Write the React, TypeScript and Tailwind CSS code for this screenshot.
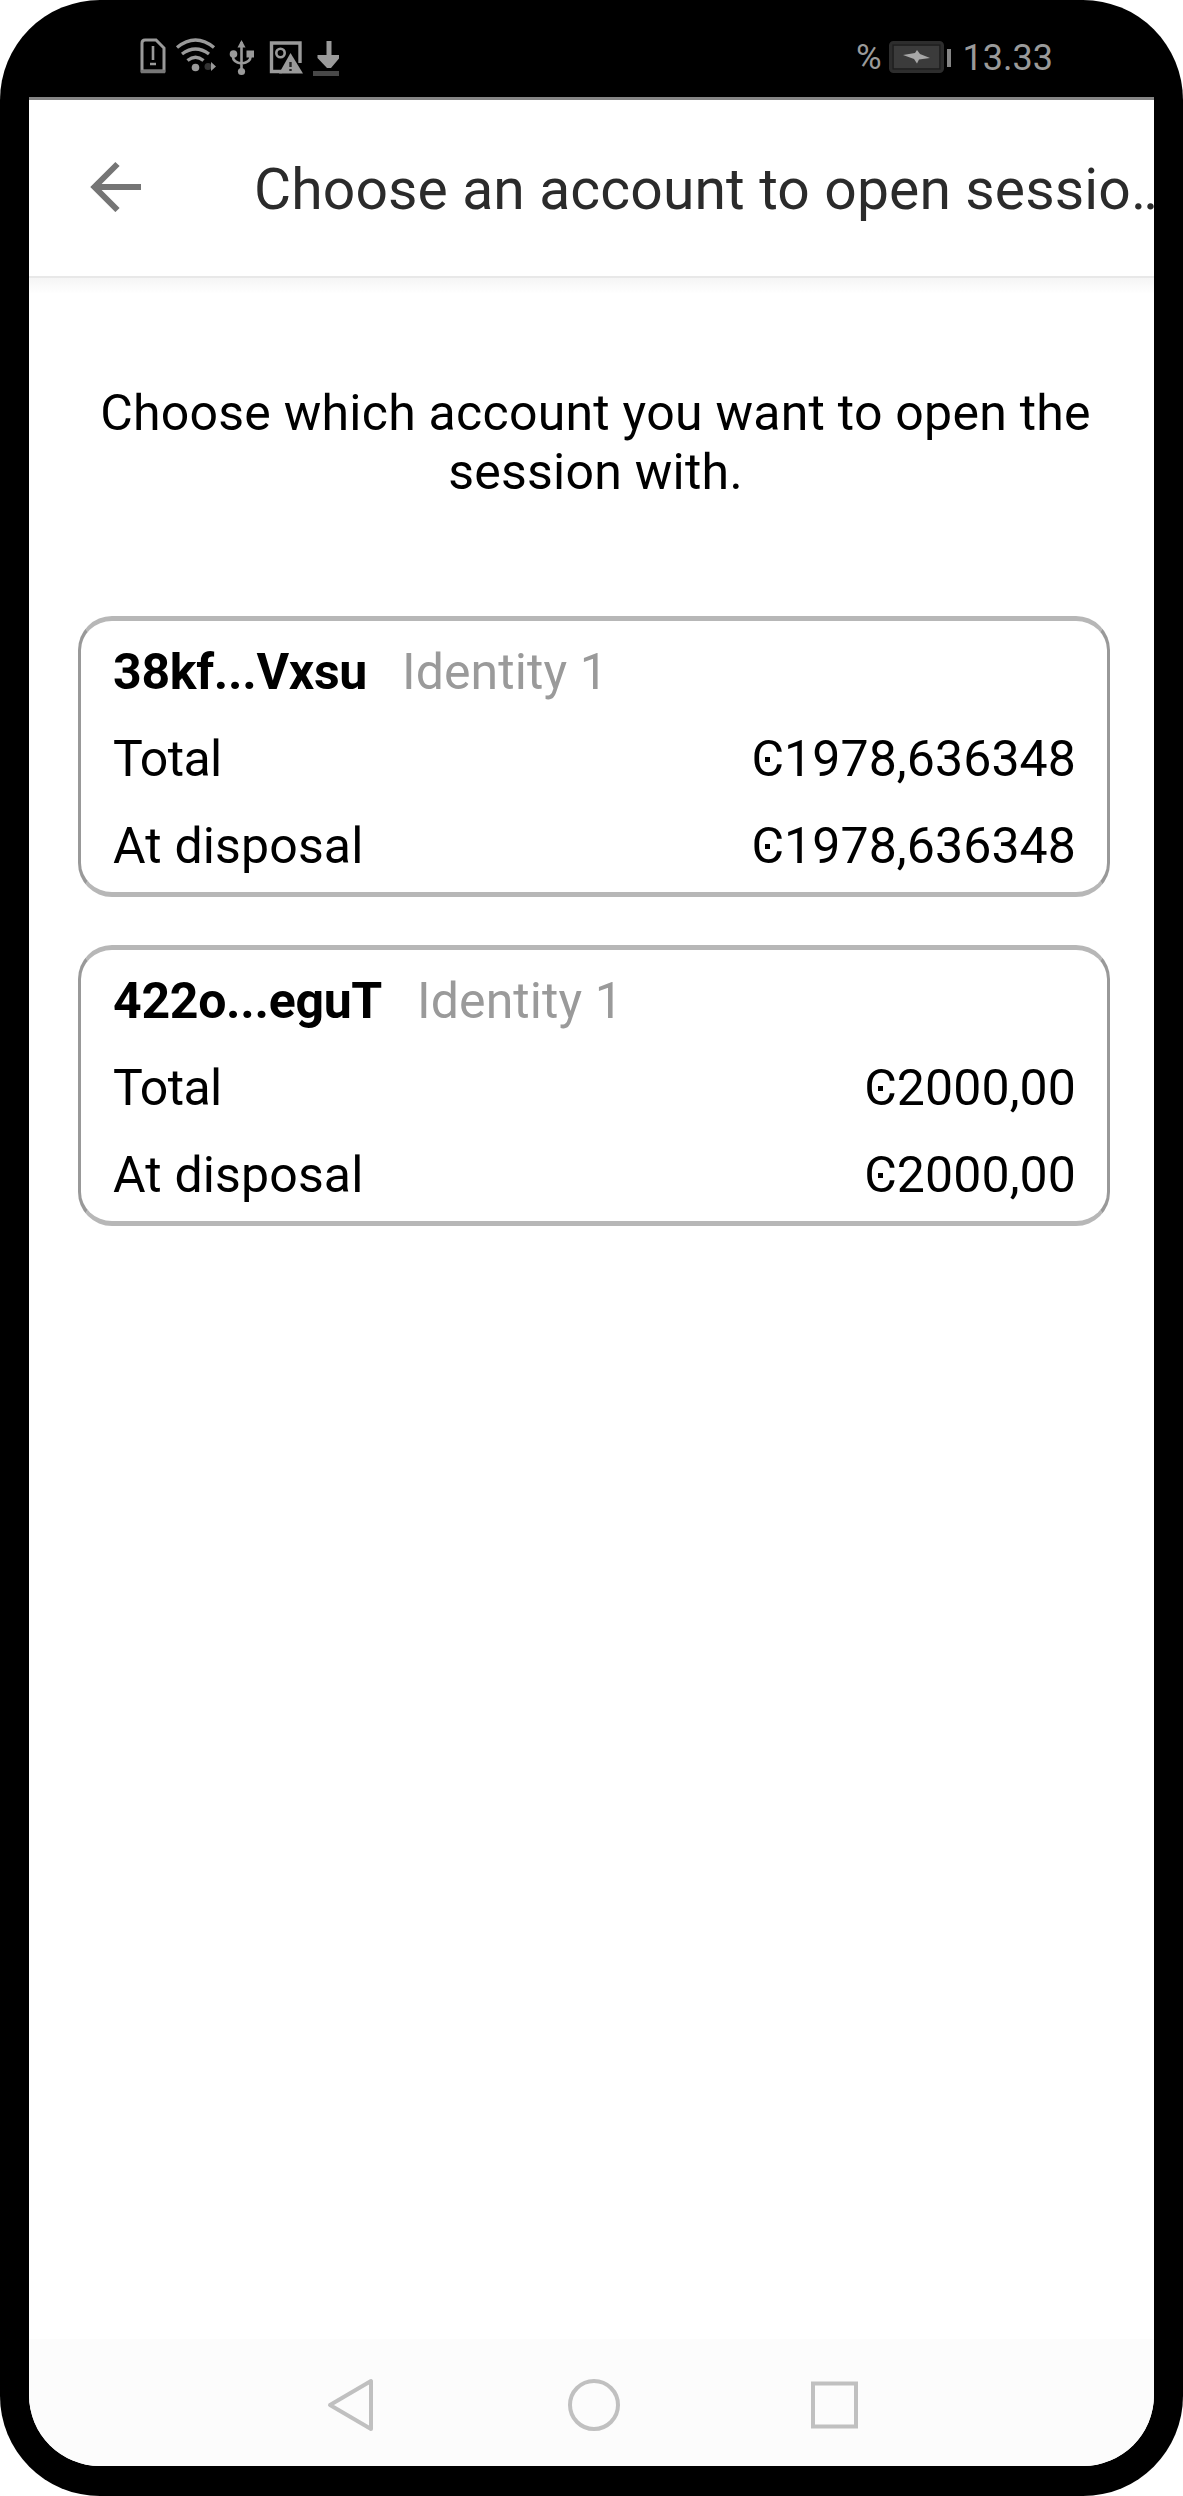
import type { ReactNode } from "react";

type Account = { address: string; identity: string; total: string; disposal: string };

const accounts: Account[] = [
  { address: "38kf...Vxsu", identity: "Identity 1", total: "1978,636348", disposal: "1978,636348" },
  { address: "422o...eguT", identity: "Identity 1", total: "2000,00", disposal: "2000,00" },
];

function StatusBar() {
  return (
    <div className="flex h-[97px] shrink-0 items-start justify-between pt-[36px] pr-[101px] pl-[109px] text-[#9a9a9a]">
      <div className="flex h-[42px] items-start">
        {/* SIM alert */}
        <svg width="30" height="42" viewBox="0 0 30 42" fill="none">
          <path d="M4 35V7q0-3 3-3h11l8 8v23z" stroke="currentColor" strokeWidth="3" />
          <path d="M3 35.500h24" stroke="#777" strokeWidth="3.500" />
          <path d="M15 10v14" stroke="currentColor" strokeWidth="2.600" />
          <path d="M12 28h6" stroke="currentColor" strokeWidth="2.500" />
        </svg>
        {/* Wi-Fi */}
        <svg className="ml-[6px]" width="44" height="42" viewBox="0 0 44 42" fill="none">
          <path d="M3 11.500Q21.500-3.500 40 11.500M8 18Q21.500 8 35 18M13.500 24.500Q21.500 18 29.500 24.500" stroke="currentColor" strokeWidth="3.400" />
          <circle cx="21.500" cy="31.500" r="3.800" fill="currentColor" />
          <circle cx="34" cy="30.500" r="3.500" fill="#333" />
          <path d="M37 26v9l5-4.500z" fill="currentColor" />
        </svg>
        {/* USB */}
        <svg className="ml-[10px]" width="28" height="42" viewBox="0 0 28 42" fill="none">
          <path d="M13.500 6v31M5 18v3q0 5 8.500 6.500Q22.500 26 22.500 21v-3" stroke="currentColor" strokeWidth="2.600" />
          <path d="M13.500 4l4 7.500h-8z" fill="currentColor" />
          <circle cx="5.500" cy="18" r="3.800" fill="currentColor" />
          <path d="M18.500 14.500h7.500v7h-7.500z" fill="currentColor" />
          <circle cx="13.500" cy="35.500" r="3.600" fill="currentColor" />
        </svg>
        {/* Picture alert */}
        <svg className="ml-[12px]" width="36" height="42" viewBox="0 0 36 42" fill="none">
          <path d="M14 35.500H3.500V7H32v20" stroke="currentColor" strokeWidth="3.400" />
          <circle cx="12.500" cy="17" r="4.200" stroke="currentColor" strokeWidth="2.600" />
          <path d="M22.500 17L35 37.500H11z" fill="currentColor" />
          <path d="M22.500 26v5M22.500 33v2" stroke="#222" strokeWidth="2.400" />
        </svg>
        {/* Download */}
        <svg className="ml-[8px]" width="30" height="42" viewBox="0 0 30 42">
          <path d="M14.500 5h5v14h7.500v3.500L19 32h-4L5.500 22v-3h9z" fill="currentColor" />
          <path d="M1 35h26v5H1z" fill="#484848" />
        </svg>
      </div>
      <div className="flex h-[42px] items-start">
        <span className="pt-[2px] text-[35px] leading-[40px]">%</span>
        {/* Battery */}
        <svg className="ml-[7px]" width="64" height="42" viewBox="0 0 64 42">
          <rect x="1.500" y="6.500" width="52" height="29" rx="3" fill="#3b3b3b" stroke="#2d2d2d" strokeWidth="3" />
          <rect x="4" y="9" width="47" height="24" fill="none" stroke="#1d1d1d" strokeWidth="1.500" />
          <path d="M14 19l12-2 2-3 3 4 10 4-11 1.500-2 4-3-4.500z" fill="#a8a8a8" />
          <path d="M58 13h4v18h-4z" fill="#858585" />
        </svg>
        <span className="ml-[10px] pt-px text-[36px] leading-[42px]">13.33</span>
      </div>
    </div>
  );
}

function Header() {
  return (
    <header className="flex h-[181px] shrink-0 items-start border-t-3 border-b-2 border-t-[#858585] border-b-[#e8e8e8] pt-[58px] pl-[60px]">
      <svg className="shrink-0" width="54" height="54" viewBox="0 0 54 54" fill="none" stroke="#757575" strokeWidth="6">
        <path d="M52 29H5M28.500 6L5.500 29l23 23" />
      </svg>
      <h1 className="ml-[111px] text-[57px] leading-[64px] tracking-[0.13px] whitespace-nowrap text-[#2b2b2b]">
        Choose an account to open sessio…
      </h1>
    </header>
  );
}

function Amount({ children }: { children: ReactNode }) {
  return (
    <span className="tracking-[0.1px]">
      <span className="relative">
        C
        <span className="absolute top-[27px] left-[14px] size-[5px] bg-black" />
      </span>
      {children}
    </span>
  );
}

function AccountCard({ account }: { account: Account }) {
  return (
    <section className="h-[281px] rounded-[34px] border-x-3 border-y-5 border-x-[#999] border-y-[#b7b7b7] pt-[8px] pr-[31px] pl-[32px]">
      <div className="flex h-[87px] items-center">
        <span className="font-bold tracking-[-0.3px]">{account.address}</span>
        <span className="ml-[35px] tracking-[0.1px] text-[#9a9a9a]">{account.identity}</span>
      </div>
      <div className="flex h-[87px] items-center justify-between">
        <span className="tracking-[-0.6px]">Total</span>
        <Amount>{account.total}</Amount>
      </div>
      <div className="flex h-[87px] items-center justify-between">
        <span className="tracking-[0.15px]">At disposal</span>
        <Amount>{account.disposal}</Amount>
      </div>
    </section>
  );
}

function NavBar() {
  return (
    <nav className="flex h-[127px] shrink-0 items-center justify-center bg-[#fcfcfc] pt-[5px] pl-[3px]">
      <svg width="60" height="60" viewBox="0 0 60 60" fill="none" stroke="#c0c0c0" strokeWidth="4" strokeLinejoin="round">
        <path d="M49 6v48L8 30z" />
      </svg>
      <svg className="ml-[182px]" width="60" height="60" viewBox="0 0 60 60" fill="none" stroke="#c0c0c0" strokeWidth="4">
        <circle cx="30" cy="30" r="24" />
      </svg>
      <svg className="ml-[180px]" width="60" height="60" viewBox="0 0 60 60" fill="none" stroke="#c0c0c0" strokeWidth="4">
        <path d="M9 8.500h43v43H9z" />
      </svg>
    </nav>
  );
}

export default function App() {
  return (
    <div className="h-[2496px] w-[1183px] bg-white font-[Roboto,sans-serif]">
      <div className="flex h-full flex-col rounded-[100px] bg-black px-[29px] pb-[30px]">
        <StatusBar />
        <div className="flex min-h-0 grow flex-col overflow-hidden rounded-b-[71px] bg-white">
          <Header />
          <main className="grow bg-linear-to-b from-[#f5f5f5] to-white to-[16px] pr-[44px] pl-[49px] text-[50px] leading-[59px] text-black">
            <p className="-mr-[10px] -ml-[7px] pt-[106px] text-center tracking-[0.25px]">
              Choose which account you want to open the
              <br />
              session with.
            </p>
            <div className="mt-[114px] flex flex-col gap-[48px]">
              {accounts.map((a) => (
                <AccountCard key={a.address} account={a} />
              ))}
            </div>
          </main>
          <NavBar />
        </div>
      </div>
    </div>
  );
}
